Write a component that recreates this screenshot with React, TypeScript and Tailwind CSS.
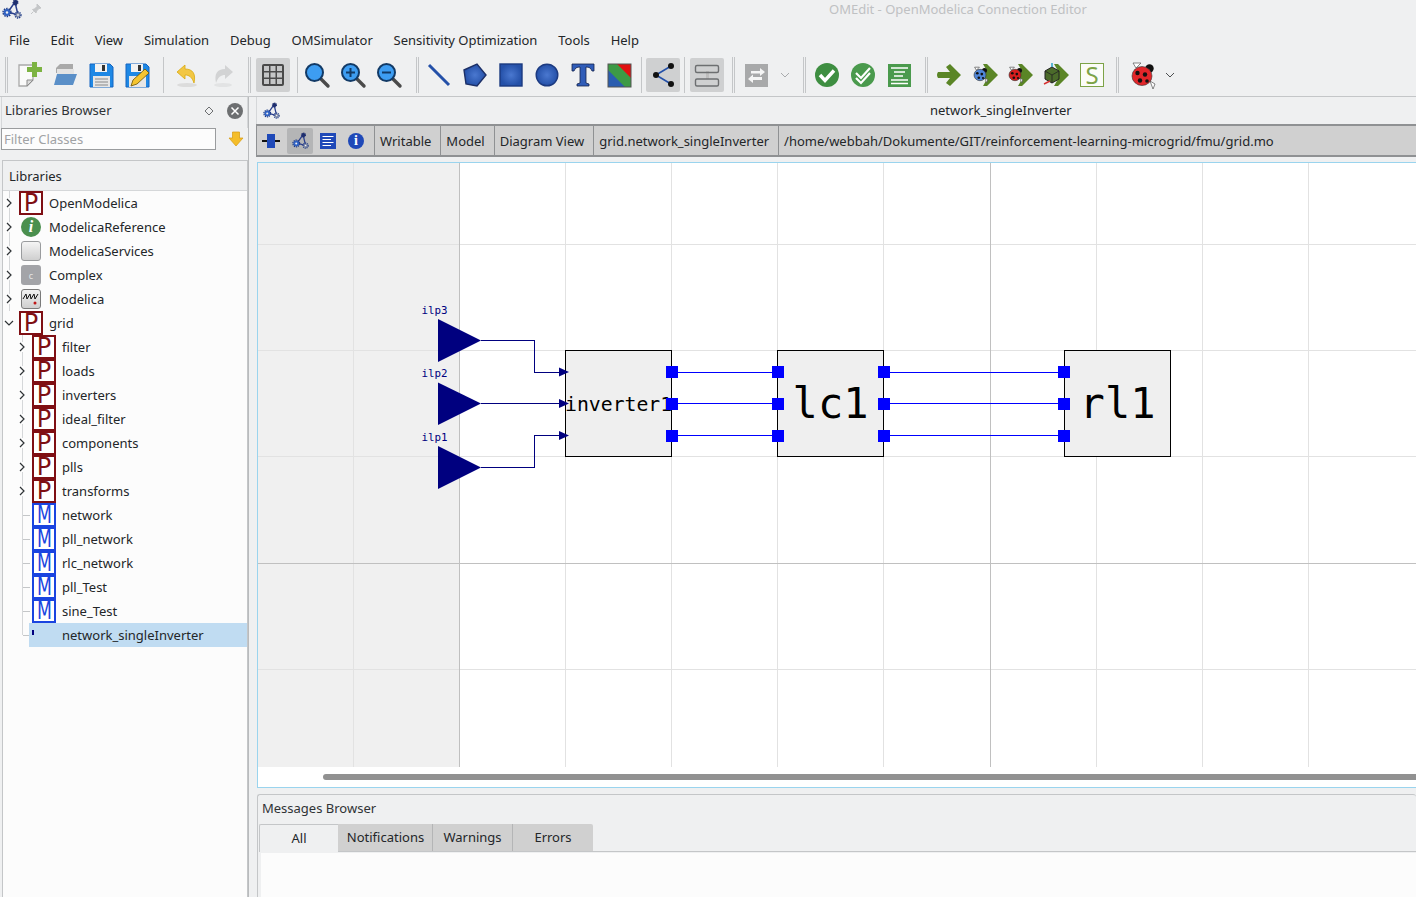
import type { ReactNode } from "react";

const menus = ["File", "Edit", "View", "Simulation", "Debug", "OMSimulator", "Sensitivity Optimization", "Tools", "Help"];

const packages = [
  { label: "filter", kind: "P" },
  { label: "loads", kind: "P" },
  { label: "inverters", kind: "P" },
  { label: "ideal_filter", kind: "P" },
  { label: "components", kind: "P" },
  { label: "plls", kind: "P" },
  { label: "transforms", kind: "P" },
  { label: "network", kind: "M" },
  { label: "pll_network", kind: "M" },
  { label: "rlc_network", kind: "M" },
  { label: "pll_Test", kind: "M" },
  { label: "sine_Test", kind: "M" },
];

function Svg({ children, size = 28 }: { children: ReactNode; size?: number }) {
  return (
    <svg width={size} height={size} viewBox="0 0 28 28" className="block shrink-0">
      {children}
    </svg>
  );
}

function Logo({ size = 20 }: { size?: number }) {
  return (
    <svg width={size} height={size} viewBox="0 0 20 20" className="block shrink-0">
      <path d="M13 3 L6 13 L16 16 Z" fill="none" stroke="#2b3f8c" strokeWidth="1.5" />
      <circle cx="13.5" cy="3.5" r="2.4" fill="#1f2f6f" stroke="#1f2f6f" strokeWidth="1.2" strokeDasharray="1.2 0.8" />
      <circle cx="5" cy="13.5" r="3.4" fill="#2f62c4" />
      <circle cx="5" cy="13.5" r="4" fill="none" stroke="#1d3a86" strokeWidth="1.4" strokeDasharray="1.5 1" />
      <circle cx="5" cy="13.5" r="1.2" fill="#eff0f1" />
      <circle cx="16" cy="16" r="2.6" fill="#7f8aa8" />
      <circle cx="16" cy="16" r="3" fill="none" stroke="#1d3a86" strokeWidth="1.3" strokeDasharray="1.3 0.9" />
      <circle cx="16" cy="16" r="0.9" fill="#eff0f1" />
    </svg>
  );
}

function Sep({ double = false, left }: { double?: boolean; left: string }) {
  return (
    <div className={`flex h-[36px] shrink-0 gap-[1px] ${left}`}>
      <div className="w-[1px] bg-[#c4c6c8]" />
      {double ? <div className="w-[1px] bg-[#c4c6c8]" /> : null}
    </div>
  );
}

function Tool({ children, active = false, className = "" }: { children: ReactNode; active?: boolean; className?: string }) {
  return (
    <div className={`flex h-[36px] w-[36px] shrink-0 items-center justify-center ${className}`}>
      <div className={`flex h-[34px] w-[34px] items-center justify-center rounded-[2px] ${active ? "bg-[#cfd0d1]" : ""}`}>
        {children}
      </div>
    </div>
  );
}

function Chevron({ className = "" }: { className?: string }) {
  return (
    <svg width="10" height="6" viewBox="0 0 10 6" className={`block shrink-0 ${className}`}>
      <path d="M1 1 L5 5 L9 1" fill="none" stroke="currentColor" strokeWidth="1" />
    </svg>
  );
}

function Magnifier({ sign }: { sign?: "+" | "-" }) {
  return (
    <Svg>
      <path d="M17 17 L25 25" stroke="#4a4a4a" strokeWidth="3.4" strokeLinecap="round" />
      <circle cx="11.5" cy="11.5" r="8.5" fill="#3d9df2" stroke="#123a66" strokeWidth="2" />
      {sign ? <path d="M7 11.5 H16" stroke="#123a66" strokeWidth="2" /> : null}
      {sign === "+" ? <path d="M11.5 7 V16" stroke="#123a66" strokeWidth="2" /> : null}
    </Svg>
  );
}

function Bug({ x, y, r, color }: { x: number; y: number; r: number; color: string }) {
  return (
    <g>
      <path
        d={`M${x - r * 0.6} ${y - r * 0.8} l-${r * 0.3} -${r * 0.5} l${r * 0.8} 0 Z M${x + r * 0.8} ${y + r * 0.5} l${r * 0.5} ${r * 0.3} l-${r * 0.2} ${r * 0.5} Z`}
        fill="#fff"
        stroke="#555"
        strokeWidth="0.7"
      />
      <circle cx={x + r * 0.75} cy={y - r * 0.75} r={r * 0.42} fill="#111" />
      <ellipse cx={x} cy={y} rx={r} ry={r * 0.95} fill={color} stroke="#333" strokeWidth="0.6" />
      <circle cx={x - r * 0.45} cy={y - r * 0.3} r={r * 0.22} fill="#111" />
      <circle cx={x + r * 0.3} cy={y - r * 0.15} r={r * 0.22} fill="#111" />
      <circle cx={x - r * 0.2} cy={y + r * 0.45} r={r * 0.22} fill="#111" />
      <circle cx={x + r * 0.5} cy={y + r * 0.5} r={r * 0.18} fill="#111" />
    </g>
  );
}

const greenArrow = "M11 6 L15 3 L26 14 L15 25 L11 22 L15 17 L3 17 Q1 14 3 11 L15 11 Z";

function GreenChevron() {
  return <path d="M12 3 L16 3 L27 14 L16 25 L12 25 L16 18 L9 18 L9 10 L16 10 Z" fill="#5a8526" />;
}

function Toolbar() {
  return (
    <div className="flex h-[42px] shrink-0 items-center border-b border-[#c4c6c8] pb-[2px] pl-[5px] text-[#7f8285]">
      <Sep double left="" />
      <Tool className="ml-[3px]">
        <Svg>
          <path d="M4 4 H18 V19 L12 25 H4 Z" fill="#fafafa" stroke="#a9a9a9" strokeWidth="1.3" />
          <path d="M18 19 L12 25 V19 Z" fill="#dcdcdc" stroke="#8c8c8c" />
          <path d="M17 1 H22 V6 H27 V11 H22 V16 H17 V11 H12 V6 H17 Z" fill="#7cb342" />
        </Svg>
      </Tool>
      <Tool>
        <Svg>
          <path d="M5 7 L9 3 H22 V12 H5 Z" fill="#a9a9a9" />
          <path d="M6 8 H23 V14 H6 Z" fill="#e3e3e3" />
          <path d="M6 13 H26 L22 24 H3 Z" fill="#5a8fc8" />
        </Svg>
      </Tool>
      <Tool>
        <Svg>
          <path d="M3 3 H23 L26 6 V26 H3 Z" fill="#1e88e5" stroke="#1565c0" />
          <rect x="8" y="3" width="12" height="8" fill="#f2f2f2" />
          <rect x="15" y="4" width="3" height="6" fill="#333" />
          <rect x="6" y="15" width="17" height="11" fill="#e6e6e6" />
          <path d="M8 18 H21 M8 21 H21 M8 24 H21" stroke="#888" />
        </Svg>
      </Tool>
      <Tool>
        <Svg>
          <path d="M3 3 H23 L26 6 V26 H3 Z" fill="#1e88e5" stroke="#1565c0" />
          <rect x="8" y="3" width="12" height="8" fill="#f2f2f2" />
          <rect x="15" y="4" width="3" height="6" fill="#333" />
          <rect x="6" y="15" width="17" height="11" fill="#e6e6e6" />
          <path d="M8 25 L10 19 L22 8 L26 12 L14 23 Z" fill="#f4c430" stroke="#6b5200" strokeWidth="0.8" />
        </Svg>
      </Tool>
      <Sep left="ml-[8px]" />
      <Tool className="ml-[5px]">
        <Svg>
          <ellipse cx="14" cy="24" rx="10" ry="2" fill="#dcdcdc" />
          <path d="M4 11 L12 4 V8 C20 8 23 13 21 22 C19 16 16 14 12 14 V18 Z" fill="#f2c744" stroke="#d9a90f" strokeWidth="0.8" />
        </Svg>
      </Tool>
      <Tool>
        <Svg>
          <ellipse cx="14" cy="24" rx="9" ry="2" fill="#e2e3e4" />
          <path d="M24 11 L16 4 V8 C8 8 5 13 7 22 C9 16 12 14 16 14 V18 Z" fill="#d2d3d4" />
        </Svg>
      </Tool>
      <Sep double left="ml-[7px]" />
      <Tool active className="ml-[4px]">
        <Svg>
          <rect x="3" y="3" width="22" height="22" rx="2" fill="#4a4a4a" />
          <path d="M5 5 H10 V10 H5 Z M11.5 5 H16.5 V10 H11.5 Z M18 5 H23 V10 H18 Z M5 11.5 H10 V16.5 H5 Z M11.5 11.5 H16.5 V16.5 H11.5 Z M18 11.5 H23 V16.5 H18 Z M5 18 H10 V23 H5 Z M11.5 18 H16.5 V23 H11.5 Z M18 18 H23 V23 H18 Z" fill="#c5c6c7" />
        </Svg>
      </Tool>
      <Sep left="ml-[6px]" />
      <Tool className="ml-[1px]"><Magnifier /></Tool>
      <Tool><Magnifier sign="+" /></Tool>
      <Tool><Magnifier sign="-" /></Tool>
      <Sep double left="ml-[9px]" />
      <Tool className="ml-[2px]">
        <Svg>
          <path d="M4 4 L24 24" stroke="#2450a8" strokeWidth="3" />
        </Svg>
      </Tool>
      <Tool>
        <Svg>
          <radialGradient id="blueFill">
            <stop offset="0" stopColor="#4a78d0" />
            <stop offset="1" stopColor="#2450a8" />
          </radialGradient>
          <path d="M3 9 L16 3 L25 14 L16 25 L5 23 Z" fill="url(#blueFill)" stroke="#1c2f66" strokeWidth="1.4" />
        </Svg>
      </Tool>
      <Tool>
        <Svg>
          <rect x="3" y="3" width="22" height="22" fill="url(#blueFill)" stroke="#1c3a80" strokeWidth="1.4" />
        </Svg>
      </Tool>
      <Tool>
        <Svg>
          <circle cx="14" cy="14" r="10.8" fill="url(#blueFill)" stroke="#1c3a80" strokeWidth="1.4" />
        </Svg>
      </Tool>
      <Tool>
        <Svg>
          <path d="M3 3 H25 V10 H23 C22 7 20 6 17 6 V22 L20 23 V25 H8 V23 L11 22 V6 C8 6 6 7 5 10 H3 Z" fill="#2f5cb8" stroke="#14234f" strokeWidth="0.8" />
        </Svg>
      </Tool>
      <Tool>
        <Svg>
          <rect x="3" y="3" width="23" height="23" fill="#3d9a45" />
          <path d="M3 9 L20 26 H3 Z" fill="#2a5db0" />
          <path d="M12 3 H26 V17 Z" fill="#e01010" />
          <rect x="3" y="3" width="23" height="23" fill="none" stroke="#555" />
        </Svg>
      </Tool>
      <Sep left="ml-[4px]" />
      <Tool active className="ml-[3px]">
        <Svg>
          <path d="M7 14 L22 5 M7 14 L22 23" stroke="#2450a8" strokeWidth="1.6" />
          <circle cx="7" cy="14" r="3" fill="#111" />
          <circle cx="22" cy="5" r="3" fill="#111" />
          <circle cx="22" cy="23" r="3" fill="#111" />
        </Svg>
      </Tool>
      <Sep left="ml-[3px]" />
      <Tool active className="ml-[4px]">
        <Svg>
          <rect x="13" y="10" width="3" height="8" fill="#bdbdbd" />
          <rect x="2.5" y="4.5" width="23" height="7" rx="1.5" fill="none" stroke="#6d6f71" strokeWidth="1.4" />
          <rect x="2.5" y="18" width="23" height="7" rx="1.5" fill="none" stroke="#6d6f71" strokeWidth="1.4" />
        </Svg>
      </Tool>
      <Sep double left="ml-[7px]" />
      <Tool className="ml-[3px]">
        <Svg>
          <rect x="3" y="3" width="23" height="23" fill="#a8a9aa" />
          <path d="M9 10 H18 V7 L23 11 L18 15 V12.5 H9 Z M20 16 H11 V13.5 L6 18 L11 22 V19 H20 Z" fill="#f5f5f5" />
        </Svg>
      </Tool>
      <div className="flex h-[36px] w-[21px] shrink-0 items-center justify-end pr-[5px] text-[#a9abad]">
        <Chevron />
      </div>
      <Sep double left="ml-[8px]" />
      <Tool className="ml-[3px]">
        <Svg>
          <circle cx="14" cy="14" r="12" fill="#3e8e41" />
          <path d="M7 14 L12 19.5 L21 9.5" fill="none" stroke="#fff" strokeWidth="3.4" />
        </Svg>
      </Tool>
      <Tool>
        <Svg>
          <circle cx="14" cy="14" r="12" fill="#4a9a4d" />
          <path d="M7 12 L12 17 L21 7 M7 17 L12 22 L21 12" fill="none" stroke="#fff" strokeWidth="2.2" />
        </Svg>
      </Tool>
      <Tool>
        <Svg>
          <rect x="3" y="3" width="23" height="23" fill="#4a9a4d" />
          <path d="M6 7 H23 M9 11 H20 M9 15 H18 M6 19 H23 M6 22.5 H23" stroke="#fff" strokeWidth="1.4" />
        </Svg>
      </Tool>
      <Sep double left="ml-[8px]" />
      <Tool className="ml-[3px]">
        <Svg>
          <path d={greenArrow} fill="#5a8526" />
        </Svg>
      </Tool>
      <Tool>
        <Svg>
          <GreenChevron />
          <Bug x={9} y={14} r={6} color="#4f86d9" />
        </Svg>
      </Tool>
      <Tool className="-ml-[1px]">
        <Svg>
          <GreenChevron />
          <Bug x={9} y={14} r={6} color="#d81e1e" />
        </Svg>
      </Tool>
      <Tool>
        <Svg>
          <GreenChevron />
          <path d="M3 10 L10 6 L17 10 L17 18 L10 22 L3 18 Z" fill="#4b6b2a" stroke="#222" strokeWidth="1" />
          <path d="M3 10 L10 14 L17 10 M10 14 V22" stroke="#222" fill="none" strokeWidth="0.8" />
          <path d="M10 6 V2" stroke="#2aa5c8" strokeWidth="1.5" />
          <path d="M2 23 L8 20" stroke="#d83030" strokeWidth="1.5" />
        </Svg>
      </Tool>
      <Tool>
        <div className="flex h-[24px] w-[24px] items-center justify-center border border-[#7da347] bg-[#fbfcf8] text-[24px] leading-[22px] text-[#7da347]">
          S
        </div>
      </Tool>
      <Sep double left="ml-[6px]" />
      <Tool className="ml-[5px]">
        <Svg>
          <Bug x={14} y={15} r={10} color="#e2262a" />
        </Svg>
      </Tool>
      <div className="flex h-[36px] w-[19px] shrink-0 items-center justify-center text-[#4d4f51]">
        <Chevron />
      </div>
    </div>
  );
}

function ClassIcon({ kind }: { kind: string }) {
  const color = kind === "P" ? "border-[#7f0f14] text-[#7f0f14]" : "border-[#1a44e0] text-[#1a44e0]";
  return (
    <div className={`flex h-[24px] w-[24px] shrink-0 items-center justify-center border-2 bg-white font-['DejaVu_Sans',sans-serif] text-[24px] leading-[20px] font-normal ${color}`}>
      <span className={kind === "M" ? "scale-x-[0.72]" : ""}>{kind}</span>
    </div>
  );
}

function Arrow({ open = false }: { open?: boolean }) {
  return (
    <svg width="10" height="10" viewBox="0 0 10 10" className="block">
      <path d={open ? "M1 3 L5 7 L9 3" : "M3 1 L7 5 L3 9"} fill="none" stroke="#2f3336" strokeWidth="1.2" />
    </svg>
  );
}

function TopRow({ label, icon, open = false }: { label: string; icon: ReactNode; open?: boolean }) {
  return (
    <div className="flex h-[24px] items-center">
      <div className="relative flex w-[16px] shrink-0 items-center pl-[1px]">
        <div className="bg-[#fcfcfc]">
          <Arrow open={open} />
        </div>
      </div>
      <div className="flex w-[24px] shrink-0 justify-center">{icon}</div>
      <span className="ml-[6px]">{label}</span>
    </div>
  );
}

function LibrariesBrowser() {
  return (
    <div className="flex w-[249px] shrink-0 flex-col border-r border-[#b9bbbd] pl-[1px]">
      <div className="flex h-[31px] shrink-0 items-center border-x border-[#d5d7d9] pr-[4px] pb-[4px] pl-[3px]">
        <span className="text-[#2f3336]">Libraries Browser</span>
        <svg width="10" height="10" viewBox="0 0 10 10" className="mr-[13px] ml-auto block">
          <path d="M5 1 L9 5 L5 9 L1 5 Z" fill="none" stroke="#6d6f71" />
        </svg>
        <svg width="16" height="16" viewBox="0 0 16 16" className="block">
          <circle cx="8" cy="8" r="8" fill="#6d6f71" />
          <path d="M4.5 4.5 L11.5 11.5 M11.5 4.5 L4.5 11.5" stroke="#fff" strokeWidth="1.5" />
        </svg>
      </div>
      <div className="flex h-[32px] shrink-0 items-start">
        <input
          readOnly
          placeholder="Filter Classes"
          className="h-[22px] w-[215px] border border-[#9a9c9e] bg-[#fcfcfc] px-[2px] text-[13px] outline-none placeholder:text-[#a0a2a4]"
        />
        <svg width="16" height="16" viewBox="0 0 16 16" className="mt-[3px] ml-[12px] block">
          <path d="M4.5 1 H11.5 V7 H15 L8 15 L1 7 H4.5 Z" fill="#f4bd2a" stroke="#d69a0e" strokeWidth="0.7" />
        </svg>
      </div>
      <div className="ml-[1px] flex min-h-0 flex-1 flex-col border border-b-0 border-[#c4c6c8] bg-[#fcfcfc]">
        <div className="flex h-[30px] shrink-0 items-center border-b border-[#d5d7d9] bg-[#eff0f1] pt-[1px] pl-[6px]">Libraries</div>
        <div className="relative flex flex-col">
          {/* tree guide lines */}
          <div className="absolute top-0 left-[6px] h-[120px] w-[1px] bg-[#d5d7d9]" />
          <div className="absolute top-[144px] left-[19px] h-[300px] w-[1px] bg-[#d5d7d9]" />
          <TopRow label="OpenModelica" icon={<ClassIcon kind="P" />} />
          <TopRow
            label="ModelicaReference"
            icon={
              <div className="flex h-[20px] w-[20px] items-center justify-center rounded-full bg-[#4a8f4e] font-['Liberation_Serif',serif] text-[16px] font-bold italic text-white">
                i
              </div>
            }
          />
          <TopRow
            label="ModelicaServices"
            icon={<div className="h-[20px] w-[20px] rounded-[3px] border border-[#9a9c9e] bg-gradient-to-b from-[#f5f5f5] to-[#cfcfcf]" />}
          />
          <TopRow
            label="Complex"
            icon={
              <div className="flex h-[20px] w-[20px] items-center justify-center rounded-[3px] bg-[#a3a4a8] text-[9px] text-[#e5e5e5]">
                c
              </div>
            }
          />
          <TopRow
            label="Modelica"
            icon={
              <div className="h-[20px] w-[20px] rounded-[3px] border border-[#7a7a7a] bg-gradient-to-b from-[#f2f2f2] to-[#cfcfcf]">
                <svg width="18" height="18" viewBox="0 0 18 18" className="block">
                  <path d="M1 9 L4 4 L5 9 L8 4 L9 9 L12 4 L13 9 L16 4" fill="none" stroke="#111" strokeWidth="1" />
                  <circle cx="13" cy="13" r="1.5" fill="#c01818" />
                </svg>
              </div>
            }
          />
          <TopRow label="grid" icon={<ClassIcon kind="P" />} open />
          {packages.map((item) => (
            <div key={item.label} className="flex h-[24px] items-center">
              <div className="relative flex h-[24px] w-[29px] shrink-0 items-center justify-end">
                {item.kind === "P" ? (
                  <div className="flex w-[20px] pl-[5px]">
                    <div className="bg-[#fcfcfc]"><Arrow /></div>
                  </div>
                ) : (
                  <div className="mr-[2px] h-[1px] w-[7px] bg-[#c4c6c8]" />
                )}
              </div>
              <ClassIcon kind={item.kind} />
              <span className="ml-[6px]">{item.label}</span>
            </div>
          ))}
          <div className="flex h-[24px] items-center">
            <div className="flex h-[24px] w-[26px] shrink-0 items-center justify-end">
              <div className="h-[1px] w-[6px] bg-[#c4c6c8]" />
            </div>
            <div className="flex h-[24px] flex-1 items-center bg-[#c0dcf2]">
              <div className="ml-[3px] h-[5px] w-[2px] -translate-y-[3px] bg-[#00007f]" />
              <span className="ml-[28px]">network_singleInverter</span>
            </div>
          </div>
        </div>
      </div>
    </div>
  );
}

const xLines = [353, 565, 671, 777, 883, 1096, 1202, 1308];
const yLines = [244, 350, 456, 669];
const portYs = [372, 404, 436];
const wireYs = [372.5, 403.5, 435.5];

function Diagram() {
  return (
    <svg width="1158" height="604" viewBox="258 163 1158 604" className="block shrink-0">
      <rect x="258" y="163" width="1158" height="604" fill="#fff" />
      <rect x="258" y="163" width="202" height="604" fill="#f0f0f0" />
      <g shapeRendering="crispEdges" stroke="#e2e2e2">
        {xLines.map((x) => (
          <line key={x} x1={x + 0.5} x2={x + 0.5} y1="163" y2="767" />
        ))}
        {yLines.map((y) => (
          <line key={y} x1="258" x2="1416" y1={y + 0.5} y2={y + 0.5} />
        ))}
      </g>
      <g shapeRendering="crispEdges" stroke="#c0c0c0">
        <line x1="459.5" x2="459.5" y1="163" y2="767" />
        <line x1="990.5" x2="990.5" y1="163" y2="767" />
        <line x1="258" x2="1416" y1="563.5" y2="563.5" />
      </g>

      <g fill="#efefef" stroke="#000" shapeRendering="crispEdges">
        <rect x="565.5" y="350.5" width="106" height="106" />
        <rect x="777.5" y="350.5" width="106" height="106" />
        <rect x="1064.5" y="350.5" width="106" height="106" />
      </g>

      <g fill="none" stroke="#00007f" shapeRendering="crispEdges">
        <path d="M481 340.5 H534.5 V372.5 H562" />
        <path d="M481 403.5 H562" />
        <path d="M481 467.5 H534.5 V435.5 H562" />
      </g>
      <g fill="#00007f">
        <path d="M438 319 L481 340.5 L438 362 Z" />
        <path d="M438 382.5 L481 403.5 L438 425 Z" />
        <path d="M438 446 L481 467.5 L438 489 Z" />
        <path d="M559 367.5 L569 372 L559 376.5 Z" />
        <path d="M559 399 L569 403.5 L559 408 Z" />
        <path d="M559 431 L569 435.5 L559 440 Z" />
      </g>

      <g fontFamily="'DejaVu Sans Mono', monospace" fill="#00007f" fontSize="10.8">
        <text x="421.5" y="314">ilp3</text>
        <text x="421.5" y="377">ilp2</text>
        <text x="421.5" y="441">ilp1</text>
      </g>
      <g fontFamily="'DejaVu Sans Mono', monospace" fill="#000">
        <text x="565" y="411" fontSize="19.8">inverter1</text>
        <text x="792.6" y="418" fontSize="42">lc1</text>
        <text x="1079.6" y="418" fontSize="42">rl1</text>
      </g>

      <g stroke="#0000ff" shapeRendering="crispEdges">
        {wireYs.map((y) => (
          <line key={y} x1="672" x2="778" y1={y} y2={y} />
        ))}
        {wireYs.map((y) => (
          <line key={y} x1="884" x2="1064" y1={y} y2={y} />
        ))}
      </g>
      <g fill="#0000ff">
        {portYs.map((y) =>
          [672, 778, 884, 1064].map((x) => <rect key={`${x}-${y}`} x={x - 6} y={y - 6} width="12" height="12" />),
        )}
      </g>
    </svg>
  );
}

function SubTab({ children }: { children: ReactNode }) {
  return <div className="flex h-full shrink-0 items-center border-r border-[#8f9193] pt-[1px] pr-[9px] pl-[5px]">{children}</div>;
}

function ModelPane() {
  return (
    <div className="flex h-[691px] shrink-0 flex-col overflow-hidden">
      <div className="flex h-[27px] shrink-0 items-center border-l border-[#d5d7d9] pl-[6px]">
        <Logo size={17} />
        <span className="ml-[650px] text-[#232629]">network_singleInverter</span>
      </div>
      <div className="flex h-[33px] shrink-0 items-center border-y-2 border-l border-[#8f9193] bg-[#d0d0d0] text-[#232629]">
        <div className="flex h-full w-[118px] shrink-0 items-center border-r border-[#8f9193] pl-[1px]">
          <div className="flex h-[26px] w-[26px] items-center justify-center">
            <svg width="18" height="14" viewBox="0 0 18 14" className="block">
              <path d="M0 7 H18" stroke="#111" strokeWidth="2" />
              <rect x="5" y="0" width="8" height="14" fill="#1f49b8" />
            </svg>
          </div>
          <div className="ml-[3px] flex h-[26px] w-[26px] items-center justify-center rounded-[2px] bg-[#b4b5b6]">
            <Logo size={17} />
          </div>
          <div className="ml-[2px] flex h-[26px] w-[26px] items-center justify-center">
            <svg width="16" height="16" viewBox="0 0 16 16" className="block">
              <rect width="16" height="16" fill="#1f49b8" />
              <path d="M2.5 3.5 H13.5 M2.5 6.5 H11 M2.5 9.5 H13.5 M2.5 12.5 H11" stroke="#fff" />
            </svg>
          </div>
          <div className="ml-[2px] flex h-[26px] w-[26px] items-center justify-center">
            <div className="flex h-[16px] w-[16px] items-center justify-center rounded-full bg-[#1f49b8] font-['Liberation_Serif',serif] text-[14px] font-bold text-white">
              i
            </div>
          </div>
        </div>
        <SubTab>Writable</SubTab>
        <SubTab>Model</SubTab>
        <SubTab>Diagram View</SubTab>
        <SubTab>grid.network_singleInverter</SubTab>
        <div className="px-[5px] pt-[1px] whitespace-nowrap">/home/webbah/Dokumente/GIT/reinforcement-learning-microgrid/fmu/grid.mo</div>
      </div>
      <div className="mt-[5px] ml-[1px] flex min-h-0 flex-1 flex-col border-y border-l border-[#9ad4ee] bg-white">
        <Diagram />
        <div className="flex h-[20px] shrink-0 items-center pl-[65px]">
          <div className="h-[6px] flex-1 rounded-l-[3px] bg-[#919191]" />
        </div>
      </div>
    </div>
  );
}

function MessagesBrowser() {
  return (
    <div className="mt-[6px] ml-[1px] flex min-h-0 flex-1 flex-col rounded-t-[3px] border-t border-l border-[#c4c6c8] pl-[1px]">
      <div className="flex h-[29px] shrink-0 items-center pb-[2px] pl-[3px] text-[#2f3336]">Messages Browser</div>
      <div className="flex h-[28px] shrink-0 items-stretch border-b border-[#c4c6c8]">
        <div className="-mb-[1px] flex w-[79px] items-center justify-center rounded-tl-[2px] border-t border-l border-[#c4c6c8] bg-[#eff0f1]">All</div>
        <div className="flex w-[95px] items-center justify-center border-r border-[#b4b5b6] bg-[#d0d0d0] pl-[1px]">Notifications</div>
        <div className="flex w-[80px] items-center justify-center border-r border-[#b4b5b6] bg-[#d0d0d0]">Warnings</div>
        <div className="flex w-[80px] items-center justify-center rounded-tr-[2px] bg-[#d0d0d0]">Errors</div>
      </div>
      <div className="mt-[1px] ml-[2px] flex-1 bg-[#fcfcfc]" />
    </div>
  );
}

export default function App() {
  return (
    <div className="flex h-[897px] w-[1416px] flex-col overflow-hidden bg-[#eff0f1] font-['Noto_Sans',sans-serif] text-[13px] leading-none text-[#232629]">
      <div className="relative flex h-[18px] shrink-0 items-center pl-[2px]">
        <Logo />
        <svg width="12" height="12" viewBox="0 0 12 12" className="ml-[8px] block">
          <path d="M7 1 L11 5 L9 5.5 L6.5 8 L6 10 L2.5 6.5 L4.5 6 L7 3.5 Z M3.5 8.5 L1 11" fill="#c4c6c8" stroke="#c4c6c8" />
        </svg>
        <span className="absolute left-[829px] text-[#bfc1c3]">OMEdit - OpenModelica Connection Editor</span>
      </div>
      <div className="-ml-[1.4px] flex h-[37px] shrink-0 items-center">
        {menus.map((menu) => (
          <div key={menu} className="flex h-full items-center px-[10.4px] pt-[7px] whitespace-nowrap">
            {menu}
          </div>
        ))}
      </div>
      <Toolbar />
      <div className="flex min-h-0 flex-1">
        <LibrariesBrowser />
        <div className="ml-[7px] flex min-w-0 flex-1 flex-col">
          <ModelPane />
          <MessagesBrowser />
        </div>
      </div>
    </div>
  );
}
